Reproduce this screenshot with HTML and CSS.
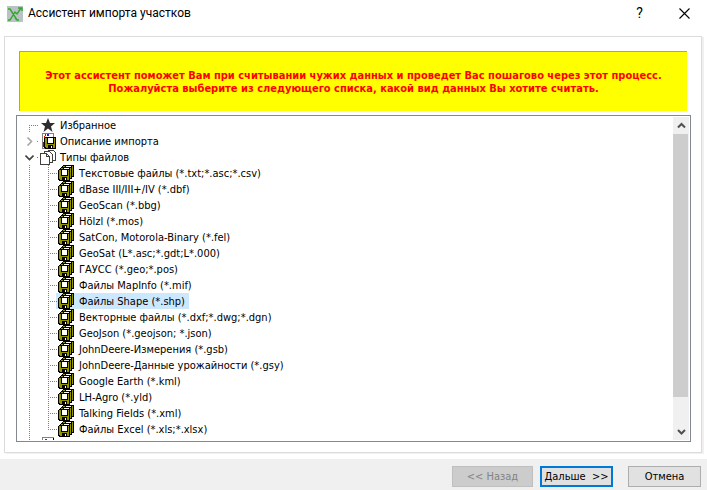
FILE: index.html
```html
<!DOCTYPE html>
<html lang="ru">
<head>
    <meta charset="UTF-8">
    <meta name="viewport" content="width=device-width, initial-scale=1.0">
    <title>Ассистент импорта участков</title>
    <link rel="stylesheet" href="styles.css">
</head>
<body>
    <!-- shared icons -->
    <svg class="icon-defs" width="0" height="0" aria-hidden="true">
        <symbol id="disk" viewBox="0 0 12 12">
            <path d="M1 0H12V12H1L0 11V1Z" fill="#000"/>
            <path d="M1 1H11V11H2L1 10Z" fill="#949400"/>
            <path d="M3 1H10V7H3Z" fill="#000"/>
            <path d="M4 1H9V6H4Z" fill="#fff"/>
            <path d="M4 8H9V11H4Z" fill="#000"/>
            <path d="M7 9H8V11H7Z" fill="#fff"/>
        </symbol>
        <symbol id="disks" viewBox="0 0 16 16">
            <use href="#disk" x="4" y="0" width="12" height="12"/>
            <use href="#disk" x="2" y="2" width="12" height="12"/>
            <use href="#disk" x="0" y="4" width="12" height="12"/>
        </symbol>
    </svg>

    <header class="title-bar">
        <svg class="app-icon" viewBox="0 0 16 16">
            <path d="M0 0H16V16H0Z" fill="#b9c3c6"/>
            <path d="M1 3H3L10 14M1 14H3L8 6L10 8L14 2M11 2H15V5M8 12L10 14H12" fill="none" stroke="#35a52c" stroke-width="1.4"/>
        </svg>
        <h1>Ассистент импорта участков</h1>
        <button class="title-btn" type="button" aria-label="Справка">?</button>
        <button class="title-btn" type="button" aria-label="Закрыть">
            <svg width="11" height="11" viewBox="0 0 11 11"><path d="M.5 .5L10.5 10.5M10.5 .5L.5 10.5" stroke="#000" stroke-width="1.1"/></svg>
        </button>
    </header>

    <main class="panel">
        <p class="banner">Этот ассистент поможет Вам при считывании чужих данных и проведет Вас пошагово через этот процесс.<br>Пожалуйста выберите из следующего списка, какой вид данных Вы хотите считать.</p>

        <div class="tree">
            <ul class="tree-list">
                <li>
                    <div class="row">
                        <svg class="icon smooth" viewBox="0 0 16 16"><path d="M8 1L10 6H15L11 9.500L12.500 15L8 11.500L3.500 15L5 9.500L1 6H6Z" fill="#2d2d32"/></svg>
                        <span class="label">Избранное</span>
                    </div>
                </li>
                <li>
                    <div class="row">
                        <button class="expander" type="button" aria-label="Развернуть">
                            <svg width="9" height="9" viewBox="0 0 9 9"><path d="M2.500 .5L6.500 4.500L2.500 8.500" fill="none" stroke="#a6a6a6" stroke-width="1.600"/></svg>
                        </button>
                        <svg class="icon" viewBox="0 0 16 16">
                            <path d="M2 0H14V16H2Z" fill="#808080"/>
                            <path d="M3 1H13V15H3Z" fill="#fff"/>
                            <path d="M5 1H6V3H5ZM4 3H5V6H4Z" fill="#e00000"/>
                            <path d="M3 9H4V14H3ZM7 1H9V3H7Z" fill="#2020d0"/>
                            <use href="#disk" x="4" y="4" width="12" height="12"/>
                        </svg>
                        <span class="label">Описание импорта</span>
                    </div>
                </li>
                <li>
                    <div class="row">
                        <button class="expander" type="button" aria-label="Свернуть">
                            <svg width="9" height="9" viewBox="0 0 9 9"><path d="M.5 2.500L4.500 6.500L8.500 2.500" fill="none" stroke="#404040" stroke-width="1.600"/></svg>
                        </button>
                        <svg class="icon" viewBox="0 0 16 16">
                            <g fill="#fff" stroke="#404040">
                                <path d="M8.500 1.500H13.500L15.500 3.500V11.500H8.500Z"/>
                                <path d="M4.500 2.500H9.500L12.500 5.500V13.500H4.500Z"/>
                                <path d="M.5 4.500H6.500L9.500 7.500V15.500H.5Z"/>
                                <path d="M6.500 4.500V7.500H9.500" fill="none"/>
                            </g>
                        </svg>
                        <span class="label">Типы файлов</span>
                    </div>
                    <ul class="sub-list">
                        <li class="row"><svg class="icon"><use href="#disks"/></svg><span class="label">Текстовые файлы (*.txt;*.asc;*.csv)</span></li>
                        <li class="row"><svg class="icon"><use href="#disks"/></svg><span class="label">dBase III/III+/IV (*.dbf)</span></li>
                        <li class="row"><svg class="icon"><use href="#disks"/></svg><span class="label">GeoScan (*.bbg)</span></li>
                        <li class="row"><svg class="icon"><use href="#disks"/></svg><span class="label">Hölzl (*.mos)</span></li>
                        <li class="row"><svg class="icon"><use href="#disks"/></svg><span class="label">SatCon, Motorola-Binary (*.fel)</span></li>
                        <li class="row"><svg class="icon"><use href="#disks"/></svg><span class="label">GeoSat (L*.asc;*.gdt;L*.000)</span></li>
                        <li class="row"><svg class="icon"><use href="#disks"/></svg><span class="label">ГАУСС (*.geo;*.pos)</span></li>
                        <li class="row"><svg class="icon"><use href="#disks"/></svg><span class="label">Файлы MapInfo (*.mif)</span></li>
                        <li class="row selected"><svg class="icon"><use href="#disks"/></svg><span class="label">Файлы Shape (*.shp)</span></li>
                        <li class="row"><svg class="icon"><use href="#disks"/></svg><span class="label">Векторные файлы (*.dxf;*.dwg;*.dgn)</span></li>
                        <li class="row"><svg class="icon"><use href="#disks"/></svg><span class="label">GeoJson (*.geojson; *.json)</span></li>
                        <li class="row"><svg class="icon"><use href="#disks"/></svg><span class="label">JohnDeere-Измерения (*.gsb)</span></li>
                        <li class="row"><svg class="icon"><use href="#disks"/></svg><span class="label">JohnDeere-Данные урожайности (*.gsy)</span></li>
                        <li class="row"><svg class="icon"><use href="#disks"/></svg><span class="label">Google Earth (*.kml)</span></li>
                        <li class="row"><svg class="icon"><use href="#disks"/></svg><span class="label">LH-Agro (*.yld)</span></li>
                        <li class="row"><svg class="icon"><use href="#disks"/></svg><span class="label">Talking Fields (*.xml)</span></li>
                        <li class="row"><svg class="icon"><use href="#disks"/></svg><span class="label">Файлы Excel (*.xls;*.xlsx)</span></li>
                    </ul>
                </li>
                <li>
                    <div class="row">
                        <svg class="icon" viewBox="0 0 16 16">
                            <path d="M2 0H14V16H2Z" fill="#808080"/>
                            <path d="M3 1H13V16H3Z" fill="#fff"/>
                            <path d="M5 2H7V3H5Z" fill="#e00000"/>
                            <path d="M13 1H14V16H13Z" fill="#000"/>
                        </svg>
                    </div>
                </li>
            </ul>
            <div class="scrollbar">
                <button class="scroll-btn" type="button" aria-label="Вверх">
                    <svg width="9" height="9" viewBox="0 0 9 9"><path d="M1 6.500L4.500 3L8 6.500" fill="none" stroke="#505050" stroke-width="2"/></svg>
                </button>
                <div class="track"><div class="thumb"></div></div>
                <button class="scroll-btn" type="button" aria-label="Вниз">
                    <svg width="9" height="9" viewBox="0 0 9 9"><path d="M1 3L4.500 6.500L8 3" fill="none" stroke="#505050" stroke-width="2"/></svg>
                </button>
            </div>
        </div>
    </main>

    <footer class="buttons">
        <button class="btn btn-back" type="button" disabled>&lt;&lt; Назад</button>
        <button class="btn btn-next" type="button">Дальше &nbsp;&gt;&gt;</button>
        <button class="btn btn-cancel" type="button">Отмена</button>
    </footer>
</body>
</html>
```
FILE: styles.css
```css
* {
    box-sizing: border-box;
}
body {
    display: flex;
    flex-direction: column;
    height: 100vh;
    margin: 0;
    overflow: hidden;
    background-color: #fff;
    color: #000;
    font-family: Tahoma, 'DejaVu Sans Condensed', 'DejaVu Sans', sans-serif;
    font-size: 11px;
    line-height: 13px;
}
button {
    margin: 0;
    padding: 0;
    border: none;
    background: none;
    color: inherit;
    font: inherit;
}
.icon-defs {
    position: absolute;
}

/* title bar */
.title-bar {
    display: flex;
    align-items: center;
    height: 27px;
    padding-left: 7px;
    font-family: 'Segoe UI', Roboto, 'Open Sans', sans-serif;
}
.app-icon {
    width: 16px;
    height: 16px;
}
.title-bar h1 {
    flex: 1;
    margin: 0 0 0 5px;
    font-size: 12px;
    font-weight: normal;
}
.title-btn {
    display: flex;
    align-items: center;
    justify-content: center;
    width: 45px;
    height: 27px;
    font-size: 14px;
}

/* content */
.panel {
    display: flex;
    flex: 1;
    flex-direction: column;
    gap: 4px;
    min-height: 0;
    margin: 9px 5px 6px 4px;
    padding: 14px 10px 10px 11px;
    border: 1px solid #dcdcdc;
    box-shadow: 2px 1px 0 #f0f0f0;
}
.banner {
    margin: 0 4px 0 3px;
    padding: 17px 0 16px;
    border-top: 1px solid #a0a0a0;
    border-left: 1px solid #a0a0a0;
    background-color: #ff0;
    color: #f00;
    font-weight: bold;
    text-align: center;
}
.tree {
    display: flex;
    flex: 1;
    min-height: 0;
    padding: 1px;
    border: 1px solid #828790;
}

/* tree */
.tree-list, .sub-list {
    margin: 0;
    padding: 0;
    list-style: none;
    background-image: repeating-linear-gradient(#808080 0 1px, transparent 1px 2px);
    background-repeat: no-repeat;
    background-size: 1px 100%;
}
.tree-list {
    flex: 1;
    overflow: hidden;
    padding-left: 11px;
    background-position: 11px 8px;
}
.sub-list {
    padding-left: 19px;
    background-position: 19px -8px;
}
.row {
    display: flex;
    align-items: center;
    height: 16px;
    background: repeating-linear-gradient(90deg, #808080 0 1px, transparent 1px 2px) no-repeat 0 8px / 10px 1px;
}
.icon {
    flex: none;
    width: 16px;
    height: 16px;
    margin-left: 11px;
    shape-rendering: crispEdges;
}
.smooth {
    shape-rendering: auto;
}
.label {
    padding: 1px 4px;
    white-space: nowrap;
}
.sub-list .icon {
    margin-left: 10px;
}
.sub-list .label {
    padding-left: 5px;
}
.selected {
    width: max-content;
    background-image: repeating-linear-gradient(90deg, #808080 0 1px, transparent 1px 2px), linear-gradient(90deg, transparent 8px, #cce8ff 8px);
    background-position: 0 8px, 0 0;
    background-size: 10px 1px, 100% 100%;
}
.expander {
    display: flex;
    width: 13px;
    height: 16px;
    margin: 0 -7px 0 -6px;
    align-items: center;
    justify-content: center;
    background-color: #fff;
}

/* scrollbar */
.scrollbar {
    display: flex;
    flex-direction: column;
    width: 16px;
    background-color: #f0f0f0;
}
.scroll-btn {
    display: flex;
    align-items: center;
    justify-content: center;
    height: 17px;
}
.track {
    flex: 1;
}
.thumb {
    width: 15px;
    height: 91%;
    background-color: #cdcdcd;
}

/* footer */
.buttons {
    display: flex;
    align-items: center;
    justify-content: flex-end;
    height: 31px;
    padding: 4px 6px 0 0;
    background-color: #f0f0f0;
}
.btn {
    width: 73px;
    height: 21px;
    border: 1px solid #adadad;
    background-color: #e1e1e1;
}
.btn-back {
    width: 81px;
    border-color: #bfbfbf;
    background-color: #ccc;
    color: #838383;
}
.btn-next {
    margin: 0 15px 0 7px;
    border: 2px solid #0078d7;
}
```
